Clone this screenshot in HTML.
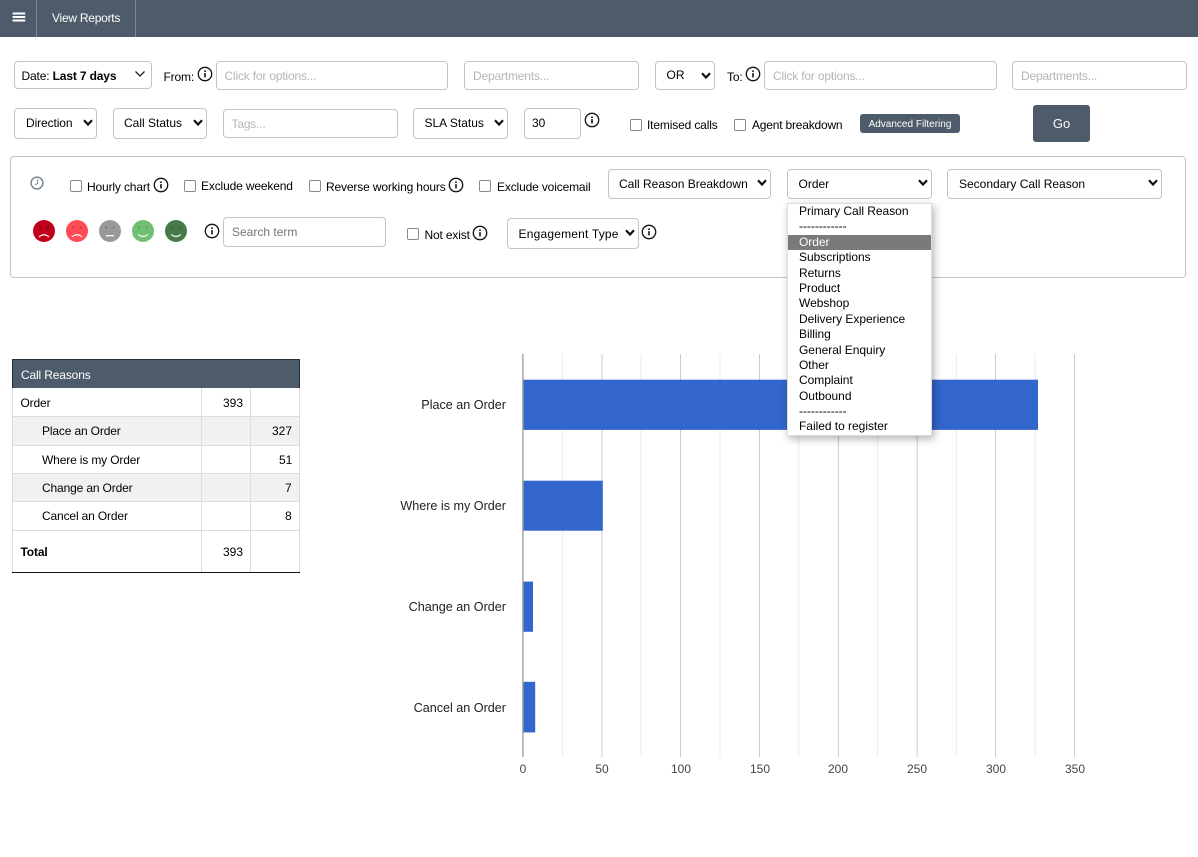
<!DOCTYPE html>
<html><head><meta charset="utf-8"><title>View Reports</title>
<style>
html,body{margin:0;padding:0;background:#fff;width:1198px;height:857px;overflow:hidden}
body{position:relative;font-family:"Liberation Sans",sans-serif;font-size:12px;color:#000;letter-spacing:-.15px}
.a{position:absolute;box-sizing:border-box}
.t{position:absolute;white-space:nowrap;line-height:16px;height:16px}
.b{position:absolute;box-sizing:border-box;border:1px solid #c4c4c4;border-radius:4px;background:#fff;line-height:16px;white-space:nowrap;letter-spacing:0}
.b.ph{color:#b5b5b5;letter-spacing:-.18px}
.cb{position:absolute;box-sizing:border-box;width:12px;height:12px;border:1px solid #8a8a8a;border-radius:2px;background:#fff}
svg{position:absolute;overflow:visible}
.r{position:absolute;left:13px;width:286px;box-sizing:border-box;border-bottom:1px solid #ddd}
.dd{position:absolute;left:799px;white-space:nowrap;line-height:16px;height:16px;color:#000;letter-spacing:-.03px}
.ax{position:absolute;top:761px;width:40px;text-align:center;line-height:16px;color:#444;letter-spacing:0}
.yl{position:absolute;right:692px;white-space:nowrap;line-height:16px;color:#222;font-size:12.6px;letter-spacing:0}
</style></head><body>

<svg width="0" height="0" style="position:absolute">
<defs>
<symbol id="i" viewBox="0 0 16 16"><circle cx="8" cy="8" r="6.7" fill="none" stroke="#111" stroke-width="1.3"/><rect x="7.2" y="7.1" width="1.6" height="4.3" fill="#111"/><rect x="7.2" y="4.4" width="1.6" height="1.6" fill="#111"/></symbol>
<symbol id="c" viewBox="0 0 10 8"><path d="M1 1.3L5 5.5L9 1.3" fill="none" stroke="#111" stroke-width="2.2"/></symbol>
</defs></svg>

<!-- header -->
<div class="a" style="left:0;top:0;width:1198px;height:37px;background:#4e5b6a"></div>
<div class="a" style="left:36px;top:0;width:1px;height:37px;background:#7f8995"></div>
<div class="a" style="left:135px;top:0;width:1px;height:37px;background:#7f8995"></div>
<svg style="left:0;top:0" width="36" height="37"><path d="M12.6 13.5H25.2M12.6 17H25.2M12.6 20.5H25.2" stroke="#fff" stroke-width="2" fill="none"/></svg>
<div class="t" style="left:52px;top:10px;color:#fff;letter-spacing:-.25px">View Reports</div>

<!-- row 1 -->
<div class="b" style="left:14px;top:61px;width:138px;height:28px;padding:6px 0 0 6.5px;letter-spacing:-.15px">Date: <b>Last 7 days</b></div>
<svg style="left:134px;top:70px" width="12" height="8" viewBox="0 0 12 8"><path d="M1.5 1.5L6 6L10.5 1.5" fill="none" stroke="#222" stroke-width="1.3"/></svg>
<div class="t" style="left:163.5px;top:69px">From:</div>
<svg style="left:196.5px;top:66px" width="16" height="16"><use href="#i"/></svg>
<div class="b ph" style="left:216px;top:61px;width:232px;height:29px;padding:6px 0 0 7.5px">Click for options...</div>
<div class="b ph" style="left:464px;top:61px;width:175px;height:29px;padding:6px 0 0 8px">Departments...</div>
<div class="b" style="left:655px;top:61px;width:60px;height:29px;padding:5px 0 0 10.5px">OR</div>
<svg style="left:701px;top:72px" width="10" height="8"><use href="#c"/></svg>
<div class="t" style="left:727px;top:69px">To:</div>
<svg style="left:745px;top:66px" width="16" height="16"><use href="#i"/></svg>
<div class="b ph" style="left:764px;top:61px;width:233px;height:29px;padding:6px 0 0 8px">Click for options...</div>
<div class="b ph" style="left:1012px;top:61px;width:175px;height:29px;padding:6px 0 0 8px">Departments...</div>

<!-- row 2 -->
<div class="b" style="left:14px;top:108px;width:83px;height:31px;padding:6px 0 0 11px;letter-spacing:-.1px">Direction</div>
<svg style="left:83px;top:119px" width="10" height="8"><use href="#c"/></svg>
<div class="b" style="left:113px;top:108px;width:94px;height:31px;padding:6px 0 0 10px">Call Status</div>
<svg style="left:193px;top:119px" width="10" height="8"><use href="#c"/></svg>
<div class="b ph" style="left:223px;top:109px;width:175px;height:29px;padding:6px 0 0 7.5px">Tags...</div>
<div class="b" style="left:413px;top:108px;width:95px;height:31px;padding:6px 0 0 10.5px">SLA Status</div>
<svg style="left:494px;top:119px" width="10" height="8"><use href="#c"/></svg>
<div class="b" style="left:524px;top:108px;width:57px;height:31px;padding:6px 0 0 7px">30</div>
<svg style="left:583.5px;top:112px" width="16" height="16"><use href="#i"/></svg>
<div class="cb" style="left:630px;top:119px"></div>
<div class="t" style="left:647px;top:117px">Itemised calls</div>
<div class="cb" style="left:734px;top:119px"></div>
<div class="t" style="left:752px;top:117px;letter-spacing:-.2px">Agent breakdown</div>
<div class="a" style="left:860px;top:114px;width:100px;height:19px;background:#4e5b6a;border-radius:3px;color:#fff;font-size:10px;line-height:21px;text-align:center;letter-spacing:0">Advanced Filtering</div>
<div class="a" style="left:1033px;top:105px;width:57px;height:37px;background:#4e5b6a;border-radius:3px;color:#fff;line-height:37px;text-align:center;font-size:13px;letter-spacing:0">Go</div>

<!-- panel -->
<div class="a" style="left:10px;top:156px;width:1176px;height:122px;border:1px solid #c4c4c4;border-radius:4px"></div>
<svg style="left:30px;top:176px" width="14" height="14" viewBox="0 0 14 14"><circle cx="7" cy="7" r="5.9" fill="none" stroke="#7b8796" stroke-width="1.5"/><path d="M7.6 3.4V7.6L5 8.6" fill="none" stroke="#7b8796" stroke-width="1"/></svg>
<div class="cb" style="left:70px;top:180px"></div>
<div class="t" style="left:87px;top:179px">Hourly chart</div>
<svg style="left:152.5px;top:176.5px" width="16" height="16"><use href="#i"/></svg>
<div class="cb" style="left:184px;top:180px"></div>
<div class="t" style="left:201px;top:178px">Exclude weekend</div>
<div class="cb" style="left:309px;top:180px"></div>
<div class="t" style="left:326px;top:179px">Reverse working hours</div>
<svg style="left:448px;top:176.5px" width="16" height="16"><use href="#i"/></svg>
<div class="cb" style="left:479px;top:180px"></div>
<div class="t" style="left:497px;top:178.5px">Exclude voicemail</div>

<div class="b" style="left:608px;top:169px;width:163px;height:30px;padding:6px 0 0 10px">Call Reason Breakdown</div>
<svg style="left:757px;top:179px" width="10" height="8"><use href="#c"/></svg>
<div class="b" style="left:787px;top:169px;width:145px;height:30px;padding:6px 0 0 10.5px">Order</div>
<svg style="left:918px;top:179px" width="10" height="8"><use href="#c"/></svg>
<div class="b" style="left:947px;top:169px;width:215px;height:30px;padding:6px 0 0 11px">Secondary Call Reason</div>
<svg style="left:1148px;top:179px" width="10" height="8"><use href="#c"/></svg>

<!-- smileys -->
<svg style="left:33px;top:220px" width="160" height="22" viewBox="0 0 160 22">
<g><circle cx="11" cy="11" r="11" fill="#c0001a"/><circle cx="7" cy="7.5" r=".7" fill="#4a0010"/><circle cx="15" cy="7.5" r=".7" fill="#4a0010"/><path d="M6 17Q11 12.5 16 17" fill="none" stroke="#fff" stroke-width="1.1"/></g>
<g transform="translate(33)"><circle cx="11" cy="11" r="11" fill="#ff4b55"/><circle cx="7" cy="7.5" r=".7" fill="#9a2029"/><circle cx="15" cy="7.5" r=".7" fill="#9a2029"/><path d="M6 17Q11 12.5 16 17" fill="none" stroke="#fff" stroke-width="1.1"/></g>
<g transform="translate(66)"><circle cx="11" cy="11" r="11" fill="#999"/><circle cx="7" cy="7.5" r=".7" fill="#555"/><circle cx="15" cy="7.5" r=".7" fill="#555"/><path d="M7 15.7H15" fill="none" stroke="#fff" stroke-width="1.2"/></g>
<g transform="translate(99)"><circle cx="11" cy="11" r="11" fill="#72bf73"/><circle cx="7" cy="7.5" r=".7" fill="#3f7f40"/><circle cx="15" cy="7.5" r=".7" fill="#3f7f40"/><path d="M6 14.5Q11 18.5 16 14.5" fill="none" stroke="#fff" stroke-width="1.1"/></g>
<g transform="translate(132)"><circle cx="11" cy="11" r="11" fill="#477a48"/><circle cx="7" cy="7.5" r=".7" fill="#234a24"/><circle cx="15" cy="7.5" r=".7" fill="#234a24"/><path d="M6 14.5Q11 18.5 16 14.5" fill="none" stroke="#fff" stroke-width="1.1"/></g>
</svg>
<svg style="left:204px;top:223px" width="16" height="16"><use href="#i"/></svg>
<div class="b" style="left:223px;top:217px;width:163px;height:30px;padding:6px 0 0 8px;color:#757575">Search term</div>
<div class="cb" style="left:407px;top:228px"></div>
<div class="t" style="left:424.5px;top:227px">Not exist</div>
<svg style="left:472px;top:224.5px" width="16" height="16"><use href="#i"/></svg>
<div class="b" style="left:507px;top:218px;width:132px;height:31px;padding:7px 0 0 10.5px;letter-spacing:.2px">Engagement Type</div>
<svg style="left:625px;top:229px" width="10" height="8"><use href="#c"/></svg>
<svg style="left:641px;top:224px" width="16" height="16"><use href="#i"/></svg>

<!-- table -->
<div class="a" style="left:12px;top:359px;width:288px;height:29px;background:#4e5b6a;border:1px solid #22303d;border-bottom:0"></div>
<div class="t" style="left:21px;top:367px;color:#fff">Call Reasons</div>
<div class="a" style="left:12px;top:388px;width:1px;height:185px;background:#ddd"></div>
<div class="a" style="left:299px;top:388px;width:1px;height:185px;background:#ddd"></div>
<div class="r" style="top:388px;height:29px"></div>
<div class="r" style="top:417px;height:29px;background:#f1f1f1"></div>
<div class="r" style="top:446px;height:28px"></div>
<div class="r" style="top:474px;height:28px;background:#f1f1f1"></div>
<div class="r" style="top:502px;height:29px"></div>
<div class="a" style="left:12px;top:572px;width:288px;height:1px;background:#111"></div>
<div class="a" style="left:201px;top:388px;width:1px;height:184px;background:#ddd"></div>
<div class="a" style="left:250px;top:388px;width:1px;height:184px;background:#ddd"></div>
<div class="t" style="left:20.5px;top:395px">Order</div>
<div class="t" style="left:223px;top:395px;letter-spacing:0">393</div>
<div class="t" style="left:42px;top:423px">Place an Order</div>
<div class="t" style="left:272px;top:423px;letter-spacing:0">327</div>
<div class="t" style="left:42px;top:452px">Where is my Order</div>
<div class="t" style="left:279px;top:452px;letter-spacing:0">51</div>
<div class="t" style="left:42px;top:480px">Change an Order</div>
<div class="t" style="left:285px;top:480px;letter-spacing:0">7</div>
<div class="t" style="left:42px;top:508px">Cancel an Order</div>
<div class="t" style="left:285px;top:508px;letter-spacing:0">8</div>
<div class="t" style="left:20.5px;top:544px"><b>Total</b></div>
<div class="t" style="left:223px;top:544px;letter-spacing:0">393</div>

<!-- chart -->
<svg style="left:0;top:0" width="1198" height="857">
<g fill="#ebebeb">
<rect x="561.9" y="354" width="1" height="403"/><rect x="640.5" y="354" width="1" height="403"/><rect x="719.5" y="354" width="1" height="403"/><rect x="798.3" y="354" width="1" height="403"/><rect x="877.1" y="354" width="1" height="403"/><rect x="955.9" y="354" width="1" height="403"/><rect x="1034.7" y="354" width="1" height="403"/>
</g>
<g fill="#ccc">
<rect x="601.5" y="354" width="1" height="403"/><rect x="680" y="354" width="1" height="403"/><rect x="759" y="354" width="1" height="403"/><rect x="837.9" y="354" width="1" height="403"/><rect x="916.7" y="354" width="1" height="403"/><rect x="995" y="354" width="1" height="403"/><rect x="1074" y="354" width="1" height="403"/>
</g>
<g fill="#3366cc">
<rect x="523" y="379.7" width="515" height="50.2"/>
<rect x="523" y="480.7" width="79.8" height="50"/>
<rect x="523" y="581.6" width="10" height="50.2"/>
<rect x="523" y="681.8" width="12.2" height="50.6"/>
</g>
<rect x="522.2" y="354" width="1.4" height="403" fill="#a0a0a0"/>
</svg>
<div class="yl" style="top:397px">Place an Order</div>
<div class="yl" style="top:498px">Where is my Order</div>
<div class="yl" style="top:599px">Change an Order</div>
<div class="yl" style="top:700px">Cancel an Order</div>
<div class="ax" style="left:503px">0</div>
<div class="ax" style="left:582px">50</div>
<div class="ax" style="left:661px">100</div>
<div class="ax" style="left:740px">150</div>
<div class="ax" style="left:818px">200</div>
<div class="ax" style="left:897px">250</div>
<div class="ax" style="left:976px">300</div>
<div class="ax" style="left:1055px">350</div>

<!-- dropdown -->
<div class="a" style="left:787px;top:203px;width:145px;height:233px;background:#fff;border:1px solid #dcdcdc;box-shadow:2px 3px 8px rgba(0,0,0,.3)"></div>
<div class="a" style="left:788px;top:235px;width:143px;height:15px;background:#7a7a7a"></div>
<div class="dd" style="top:203px">Primary Call Reason</div>
<div class="dd" style="top:218px">------------</div>
<div class="dd" style="top:234px;color:#fff">Order</div>
<div class="dd" style="top:249px">Subscriptions</div>
<div class="dd" style="top:265px">Returns</div>
<div class="dd" style="top:280px">Product</div>
<div class="dd" style="top:295px">Webshop</div>
<div class="dd" style="top:311px">Delivery Experience</div>
<div class="dd" style="top:326px">Billing</div>
<div class="dd" style="top:342px">General Enquiry</div>
<div class="dd" style="top:357px">Other</div>
<div class="dd" style="top:372px">Complaint</div>
<div class="dd" style="top:388px">Outbound</div>
<div class="dd" style="top:403px">------------</div>
<div class="dd" style="top:418px">Failed to register</div>

</body></html>
